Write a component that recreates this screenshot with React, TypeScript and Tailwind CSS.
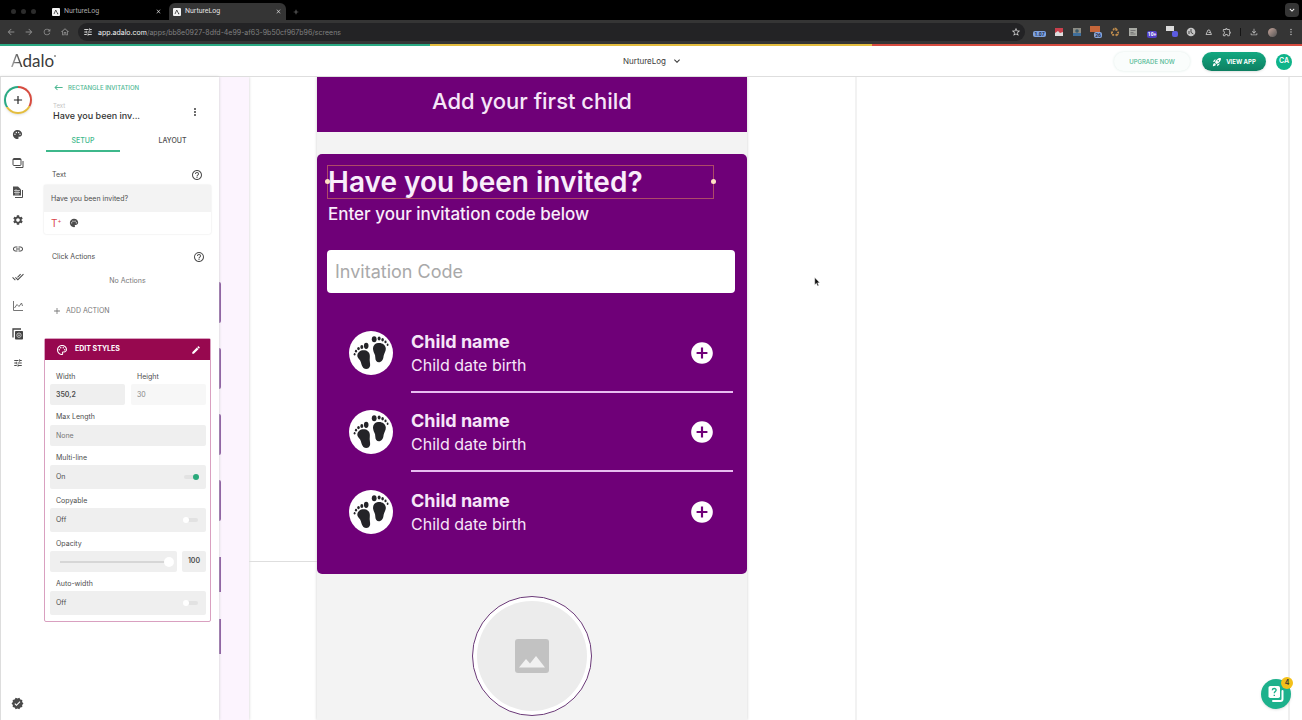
import React from "react";
import {
  MdPalette, MdSettings, MdLink, MdDoneAll, MdHelpOutline, MdEdit, MdTune, MdMoreVert,
  MdRocketLaunch, MdOutlinePalette, MdAdd, MdArrowBack, MdArrowForward, MdRefresh, MdOutlineHome,
  MdStarBorder, MdOutlineFileDownload, MdOutlineExtension, MdKeyboardArrowDown, MdClose, MdVerified,
  MdKeyboardBackspace, MdRecycling, MdAddCircle,
} from "react-icons/md";

const uiFont = "font-['Inter','Liberation_Sans',sans-serif]";
const chromeFont = "font-['Roboto','Liberation_Sans',sans-serif]";

function Favicon() {
  return (
    <svg viewBox="0 0 16 16" className="size-2 shrink-0" aria-hidden="true">
      <rect width="16" height="16" rx="2" fill="#f2f2f2" />
      <path d="M4 12 7.5 4l4 8" stroke="#333" strokeWidth="1.6" fill="none" />
      <circle cx="11.5" cy="11.5" r="1.2" fill="#333" />
    </svg>
  );
}

function BrowserTab({ active = false }: { active?: boolean }) {
  return (
    <div
      className={
        active
          ? "flex h-full w-[117px] items-center gap-1 rounded-t-md bg-[#353535] pr-1 pl-1 text-[#e4e4e4]"
          : "flex h-full w-[117px] items-center gap-1 pr-[7px] text-[#a8a8a8]"
      }
    >
      <Favicon />
      <span className="flex-1 text-[7px] leading-none">NurtureLog</span>
      <button aria-label="Close tab" className="text-[#d0d0d0]">
        <MdClose className="size-[7px]" />
      </button>
    </div>
  );
}

function Extensions() {
  return (
    <div className="flex items-center gap-2 text-[#b5b5b5]">
      <span className="flex h-2.5 w-[13px] items-end justify-center text-[5px] font-bold">
        <span className="rounded-xs bg-[#7fa3e0] px-px leading-[6px] text-[#1d2b4a]">1.07</span>
      </span>
      <svg viewBox="0 0 10 10" className="size-2.5" aria-hidden="true">
        <path d="M1 1h8v5H1z" fill="#c9404c" />
        <path d="M1 9V6l3-2 2 2 3-1v4z" fill="#ddd" />
      </svg>
      <svg viewBox="0 0 10 10" className="size-2.5" aria-hidden="true">
        <rect x="1" y="1" width="8" height="5" fill="#8d8d85" />
        <rect x="1" y="6" width="8" height="3" fill="#3f6f9c" />
        <circle cx="5" cy="4" r="1.8" fill="#3b5a6b" />
      </svg>
      <span className="flex h-3 w-3 flex-col">
        <span className="h-1.5 w-2.5 bg-[#c5663a]" />
        <span className="self-end rounded-xs bg-[#8aa6d8] px-px text-[5px] font-bold leading-[6px] text-[#1d2b4a]">26</span>
      </span>
      <MdRecycling className="size-2.5 text-[#c08d4d]" />
      <svg viewBox="0 0 10 10" className="size-2.5" aria-hidden="true">
        <rect x="1" y="1" width="8" height="8" fill="#a8aaa4" />
        <path d="M2.5 3.5h5M2.5 5.5h3M2.5 7h5" stroke="#777" />
      </svg>
      <span className="flex h-3 w-3 items-end justify-center">
        <span className="rounded-xs bg-[#5140c8] px-px text-[5px] font-bold leading-[7px] text-white">10+</span>
      </span>
      <span className="flex h-3 w-3 flex-col">
        <span className="h-[5px] w-2 bg-[#dcdcdc]" />
        <span className="size-1.5 self-end rounded-xs bg-[#5b5be0]" />
      </span>
      <svg viewBox="0 0 10 10" className="size-2.5" aria-hidden="true">
        <circle cx="5" cy="5" r="4.3" fill="#c4c4c4" />
        <path d="M5 2v3.4l2.4 1.6M3 4v3" stroke="#444" fill="none" />
      </svg>
      <svg viewBox="0 0 10 10" className="size-2.5" aria-hidden="true">
        <path d="M4 3h1.500l2 4.500H2zM4.500 5.500H7" stroke="#b5b5b5" fill="none" />
      </svg>
      <MdOutlineExtension className="size-2.5" />
    </div>
  );
}

function Browser() {
  return (
    <div className={chromeFont}>
      <div className="flex h-5 items-stretch bg-black pt-[3px]">
        <div className="flex w-[52px] items-center gap-[5px] pl-[11px]">
          <span className="size-[5px] rounded-full bg-[#2c2c2c]" />
          <span className="size-[5px] rounded-full bg-[#2c2c2c]" />
          <span className="size-[5px] rounded-full bg-[#2c2c2c]" />
        </div>
        <BrowserTab />
        <BrowserTab active />
        <button aria-label="New tab" className="ml-[6px] text-[#8a8a8a]">
          <MdAdd className="size-2" />
        </button>
        <button aria-label="Search tabs" className="mr-[3px] ml-auto flex h-3.5 w-3.5 items-center justify-center rounded bg-[#353535] text-white">
          <MdKeyboardArrowDown className="size-2.5" />
        </button>
      </div>
      <div className="flex h-6 items-center bg-[#353535] pr-[6px] pl-[6px] text-[#8c8c8c]">
        <div className="flex items-center gap-2">
          <button aria-label="Back"><MdArrowBack className="size-2.5" /></button>
          <button aria-label="Forward"><MdArrowForward className="size-2.5" /></button>
          <button aria-label="Reload"><MdRefresh className="size-2.5" /></button>
          <button aria-label="Home"><MdOutlineHome className="size-2.5" /></button>
        </div>
        <div className="ml-2 flex h-[18px] flex-1 items-center rounded-full bg-[#232325] pr-1 pl-[5px]">
          <MdTune className="size-2.5 text-[#d2d2d2]" />
          <span className={`ml-[5px] flex-1 text-[7px] leading-none text-[#808080] ${uiFont}`}>
            <span className="text-[#f1f1f1]">app.adalo.com</span>/apps/bb8e0927-8dfd-4e99-af63-9b50cf967b96/screens
          </span>
          <MdStarBorder className="size-2.5 text-[#d8d8d8]" />
        </div>
        <div className="ml-2"><Extensions /></div>
        <span className="mr-2 ml-2 h-2 w-px bg-[#151515]" />
        <div className="flex items-center gap-[9px] text-[#b5b5b5]">
          <MdOutlineFileDownload className="size-2.5" />
          <span className="size-[9px] rounded-full bg-linear-to-br from-[#c7a59b] to-[#555]" />
          <MdMoreVert className="size-2.5" />
        </div>
      </div>
      <div className="grid h-0.5 grid-cols-[33fr_34fr_33fr]">
        <span className="bg-[#2aa983]" />
        <span className="bg-[#e3bd3f]" />
        <span className="bg-[#d64b3f]" />
      </div>
    </div>
  );
}

function Header() {
  return (
    <header className="grid h-[31px] shrink-0 grid-cols-3 items-center border-b border-[#dedede] bg-white pr-2.5 pl-[11px]">
      <div className="flex items-start font-['Lato','Liberation_Sans',sans-serif] text-[17px] leading-5 text-[#3c3c3c]">
        <span className="bg-linear-to-r from-[#aaa] to-[#333] bg-clip-text text-transparent">A</span>
        <span>dalo</span>
        <span className="mt-1 size-0.5 rounded-full bg-[#888]" />
      </div>
      <button className="flex items-center gap-[5px] justify-self-center pl-[3px] text-[8px] text-[#3a3a3a]">
        NurtureLog <MdKeyboardArrowDown className="size-3" />
      </button>
      <div className="flex items-center justify-end gap-2.5 pt-px">
        <button className="mr-0.5 h-[19px] w-[76px] rounded-full bg-[#fafdfc] text-[6px] font-medium text-[#4fb893] shadow-[0_0_3px_#dcebe6]">
          UPGRADE NOW
        </button>
        <button className="flex h-[19px] w-16 items-center justify-center gap-1 rounded-full bg-linear-to-b from-[#13a981] to-[#0d7f61] text-[6px] font-bold text-white shadow-sm">
          <MdRocketLaunch className="size-2.5" /> VIEW APP
        </button>
        <button className="flex size-4 items-center justify-center rounded-full bg-[#0fb489] text-[7px] font-semibold text-white">CA</button>
      </div>
    </header>
  );
}

function ScreensIcon() {
  return (
    <svg viewBox="0 0 12 12" className="size-3" fill="none" stroke="#4a4a4a" aria-hidden="true">
      <rect x="1" y="1.500" width="8" height="7" rx="1" />
      <path d="M1 2.500h8M11 4v6.500H3.500" />
    </svg>
  );
}

function DatabaseIcon() {
  return (
    <svg viewBox="0 0 12 12" className="size-3" aria-hidden="true">
      <path d="M1 .5h5l3 3v6H1z" fill="#4f4f4f" />
      <path d="M10.500 4v7.500H3" stroke="#4f4f4f" fill="none" />
      <path d="M2 4.500h6M2 6.500h6M4 3v6M6 4v5" stroke="#ddd" strokeWidth=".7" />
    </svg>
  );
}

function AnalyticsIcon() {
  return (
    <svg viewBox="0 0 12 12" className="size-3" fill="none" stroke="#666" strokeWidth=".9" aria-hidden="true">
      <path d="M1.500 1v9.500H11M2.500 8 5 4.500l2 2L9.500 3l1 3" />
    </svg>
  );
}

function VersionsIcon() {
  return (
    <svg viewBox="0 0 12 12" className="size-3" aria-hidden="true">
      <path d="M1 9.500V1h8" stroke="#444" fill="none" strokeWidth="1.300" />
      <rect x="3" y="3" width="8" height="8.500" rx=".8" fill="#444" />
      <circle cx="7" cy="7.200" r="2.200" stroke="#ddd" strokeWidth=".8" fill="none" />
      <circle cx="7" cy="7.200" r=".8" fill="#ddd" />
    </svg>
  );
}

const railItems = [
  { label: "Branding", icon: <MdPalette className="size-[11px]" /> },
  { label: "Screens", icon: <ScreensIcon /> },
  { label: "Database", icon: <DatabaseIcon /> },
  { label: "Settings", icon: <MdSettings className="size-3" /> },
  { label: "Link", icon: <MdLink className="size-3" /> },
  { label: "Publish", icon: <MdDoneAll className="size-3" /> },
  { label: "Analytics", icon: <AnalyticsIcon /> },
  { label: "Versions", icon: <VersionsIcon /> },
  { label: "Advanced", icon: <MdTune className="size-2.5" /> },
];

function Rail() {
  return (
    <nav className="flex w-9 flex-col items-center border-l border-[#ddd] pt-[9px] pr-0.5 pb-[10px] text-[#4a4a4a]">
      <button
        aria-label="Add"
        className="flex size-7 items-center justify-center rounded-full bg-[conic-gradient(#d64b3f_0_33%,#e3bd3f_33%_66%,#2aa983_66%)] shadow-sm"
      >
        <span className="flex size-6 items-center justify-center rounded-full bg-white text-[#222]">
          <MdAdd className="size-3.5" />
        </span>
      </button>
      <div className="mt-[13px] flex h-[243px] flex-col justify-between">
        {railItems.map((item) => (
          <button key={item.label} aria-label={item.label} className="flex h-[15px] w-5 items-center justify-center">
            {item.icon}
          </button>
        ))}
      </div>
      <button aria-label="Status" className="mt-auto">
        <MdVerified className="size-[13px]" />
      </button>
    </nav>
  );
}

function Toggle({ id, label, on = false }: { id: string; label: string; on?: boolean }) {
  return (
    <div>
      <label htmlFor={id} className="block px-1.5 text-[7px] leading-3">{label}</label>
      <label className="mt-px flex h-6 cursor-pointer items-center justify-between rounded-xs bg-[#efefef] pr-2 pl-1.5 text-[7px]">
        {on ? "On" : "Off"}
        <span className="relative h-1 w-3.5 rounded-full bg-[#e2e2e2]">
          <input id={id} type="checkbox" defaultChecked={on} className="peer absolute inset-0 opacity-0" />
          <span className="absolute top-[-1px] left-[-1px] size-1.5 rounded-full bg-white peer-checked:left-[9px] peer-checked:bg-[#2aa97b]" />
        </span>
      </label>
    </div>
  );
}

function StylesCard() {
  return (
    <section className="mx-2 mt-[21px] rounded-xs border border-[#d9a0c0] bg-white text-[#4d4d4d]">
      <button className="flex h-[21px] w-full items-center gap-[7px] bg-[#97084f] pr-[9px] pl-[11px] text-white">
        <MdOutlinePalette className="size-3" />
        <span className="flex-1 text-left text-[7px] font-bold">EDIT STYLES</span>
        <MdEdit className="size-2.5" />
      </button>
      <div className="flex flex-col gap-[6px] pt-[11px] pr-1 pb-1.5 pl-[5px]">
        <div className="grid grid-cols-[75px_1fr] gap-1.5">
          <div>
            <label htmlFor="width" className="block px-1.5 text-[7px] leading-3">Width</label>
            <input id="width" defaultValue="350,2" className="mt-px block h-[21px] w-full rounded-xs bg-[#efefef] px-1.5 text-[7px] font-semibold" />
          </div>
          <div>
            <label htmlFor="height" className="block px-1.5 text-[7px] leading-3">Height</label>
            <input id="height" defaultValue="30" className="mt-px block h-[21px] w-full rounded-xs bg-[#f7f7f7] px-1.5 text-[7px] text-[#888]" />
          </div>
        </div>
        <div>
          <label htmlFor="max" className="block px-1.5 text-[7px] leading-3">Max Length</label>
          <input id="max" placeholder="None" className="mt-0.5 block h-[21px] w-full rounded-xs bg-[#efefef] px-1.5 text-[7px] placeholder:text-[#777]" />
        </div>
        <Toggle id="multi" label="Multi-line" on />
        <Toggle id="copy" label="Copyable" />
        <div>
          <label htmlFor="opacity" className="block px-1.5 text-[7px] leading-3">Opacity</label>
          <div className="mt-px flex h-[21px] gap-[5px]">
            <div className="flex flex-1 items-center rounded-xs bg-[#efefef] pr-[3px] pl-2.5">
              <input
                id="opacity"
                type="range"
                defaultValue={100}
                className="h-0.5 w-full appearance-none bg-[#d6d6d6] [&::-webkit-slider-thumb]:size-2.5 [&::-webkit-slider-thumb]:appearance-none [&::-webkit-slider-thumb]:rounded-full [&::-webkit-slider-thumb]:bg-white"
              />
            </div>
            <input aria-label="Opacity value" defaultValue="100" className="w-6 rounded-xs bg-[#efefef] text-center text-[7px] font-semibold" />
          </div>
        </div>
        <Toggle id="auto" label="Auto-width" />
      </div>
    </section>
  );
}

function Inspector() {
  return (
    <div className="flex-1 text-[#4d4d4d]">
      <a href="#parent" className="mt-1 ml-[17px] flex h-3 items-center gap-1 text-[6px] font-medium text-[#4fb893]">
        <MdKeyboardBackspace className="size-[11px]" /> RECTANGLE INVITATION
      </a>
      <div className="mt-[9px] flex items-center pr-[18px] pl-[17px]">
        <div className="flex-1">
          <p className="text-[6px] leading-[8px] text-[#c4c4c4]">Text</p>
          <h2 className="text-[9px] leading-[12px] font-medium text-[#333]">Have you been inv...</h2>
        </div>
        <button aria-label="More"><MdMoreVert className="size-3" /></button>
      </div>
      <div role="tablist" className="mt-2.5 grid grid-cols-[74px_1fr] gap-3 pr-1.5 pl-2.5 text-[7px] font-medium">
        <button role="tab" aria-selected="true" className="h-5 border-b-2 border-[#3db88b] text-[#3db88b]">SETUP</button>
        <button role="tab" aria-selected="false" className="h-5 border-b-2 border-transparent">LAYOUT</button>
      </div>
      <div className="mt-[17px] flex items-center justify-between pr-4 pl-4 text-[7px]">
        <label htmlFor="text">Text</label>
        <MdHelpOutline className="size-3" />
      </div>
      <div className="mx-2 mt-1 rounded-xs shadow-[0_0_2px_#ddd]">
        <input id="text" defaultValue="Have you been invited?" className="block h-[27px] w-full bg-[#f3f3f3] px-[7px] text-[7px]" />
        <div className="flex h-[22px] items-center gap-2 px-[7px]">
          <button aria-label="Magic text" className="flex items-start text-[#d9444c]">
            <span className="text-[10px] leading-3">T</span>
            <span className="text-[6px] leading-2">+</span>
          </button>
          <button aria-label="Text color"><MdPalette className="size-2.5" /></button>
        </div>
      </div>
      <div className="mt-[17px] flex items-center justify-between pr-[14px] pl-4 text-[7px]">
        <span>Click Actions</span>
        <MdHelpOutline className="size-3" />
      </div>
      <p className="mt-[12px] text-center text-[7px] leading-3 text-[#777]">No Actions</p>
      <button className="mt-[18px] ml-4 flex h-3 items-center gap-1 text-[7px] text-[#777]">
        <MdAdd className="size-2.5" /> ADD ACTION
      </button>
      <StylesCard />
    </div>
  );
}

function Feet() {
  return (
    <svg viewBox="0 0 44 44" className="size-11 shrink-0" aria-hidden="true">
      <circle cx="22" cy="22" r="22" fill="#fff" />
      <g fill="#242428">
        <path d="M8.300 24.500c.3-3.700 3.700-5.800 7.500-5.200 4 .7 5.500 3.700 5 7.400-.5 3.300.6 5.500.3 8-.4 3-4 4.400-6.700 2.200-2.300-2.200-1.800-5-3.400-7.600-1.100-1.600-2.900-2.900-2.700-4.800z" />
        <ellipse cx="17.200" cy="14.800" rx="2.300" ry="3.100" />
        <ellipse cx="12.800" cy="15.900" rx="1.500" ry="2" />
        <ellipse cx="9.500" cy="17.600" rx="1.300" ry="1.700" />
        <ellipse cx="7" cy="20.200" rx="1.100" ry="1.400" />
        <ellipse cx="5.600" cy="23.200" rx=".9" ry="1.200" />
        <path d="M36.800 17.500c-.3-4-4-6.100-7.800-5.500-3.800.6-5.300 3.500-4.900 6.800.5 3.300 2.300 4.500 2.200 7.700-.1 3.200 1.900 5.200 4.300 4.700 3-.6 3.700-3.400 4-6.100.4-2.800 2.400-4.700 2.200-7.600z" />
        <ellipse cx="25.200" cy="8.300" rx="2.400" ry="3" />
        <ellipse cx="30.100" cy="7.600" rx="1.500" ry="2" />
        <ellipse cx="33.600" cy="8.700" rx="1.300" ry="1.700" />
        <ellipse cx="36.500" cy="10.900" rx="1.100" ry="1.400" />
        <ellipse cx="38.600" cy="13.700" rx=".9" ry="1.200" />
      </g>
    </svg>
  );
}

function ChildRow({ last = false }: { last?: boolean }) {
  return (
    <li className="flex flex-1 gap-[18px]">
      <Feet />
      <div
        className={
          last
            ? "flex h-[62px] flex-1 items-start justify-between pr-[18px]"
            : "flex h-[62px] flex-1 items-start justify-between border-b-2 border-[#e8bdf0] pr-[18px]"
        }
      >
        <div className="text-[#f6e6f8]">
          <p className="text-[18px] leading-[22px] font-bold">Child name</p>
          <p className="mt-px text-[16px] leading-[22px]">Child date birth</p>
        </div>
        <button aria-label="Add child" className="flex h-11 items-center text-white">
          <MdAddCircle className="size-[26px]" />
        </button>
      </div>
    </li>
  );
}

function PhotoPlaceholder() {
  return (
    <svg viewBox="0 0 34 34" className="size-[34px]" aria-hidden="true">
      <rect width="34" height="34" rx="3" fill="#c2c2c2" />
      <path d="M4 28.500 11 20l4 4.500 6-7.500 9 11.500z" fill="#f1f1f1" />
    </svg>
  );
}

function PhoneScreen() {
  return (
    <main className="flex w-[430px] shrink-0 flex-col bg-[#f3f3f3] shadow-[0_0_3px_#ccc]">
      <button className="flex h-[55px] shrink-0 items-center justify-center bg-[#6f0078] pb-1.5 text-[22px] font-medium text-[#f6e6f8]">
        Add your first child
      </button>
      <section className="mt-[22px] h-[420px] shrink-0 rounded-[5px] bg-[#6f0078] pt-[11px] pr-3 pl-[10px] text-[#f9edfb]">
        <div className="relative h-[34px] w-[387px] border border-[#ae4a68]">
          <h1 className="text-[28px] leading-8 font-semibold whitespace-nowrap">Have you been invited?</h1>
          <span className="absolute top-[13px] left-[-3px] size-[5px] rounded-full bg-[#ffe3c4]" />
          <span className="absolute top-[13px] right-[-3px] size-[5px] rounded-full bg-[#ffe3c4]" />
        </div>
        <p className="mt-[3px] pl-px text-[17px] leading-6 font-medium">Enter your invitation code below</p>
        <input
          aria-label="Invitation Code"
          placeholder="Invitation Code"
          className="mt-6 block h-[43px] w-full rounded bg-white px-2 text-[18px] text-[#333] placeholder:text-[#a9a9a9]"
        />
        <ul className="mt-[38px] flex h-[238px] flex-col pr-0.5 pl-[22px]">
          <ChildRow />
          <ChildRow />
          <ChildRow last />
        </ul>
      </section>
      <div className="mt-[22px] flex size-[120px] shrink-0 items-center justify-center self-center rounded-full border border-[#6b3a78] bg-white">
        <div className="flex size-[110px] items-center justify-center rounded-full bg-[#ececec]">
          <PhotoPlaceholder />
        </div>
      </div>
    </main>
  );
}

function Canvas() {
  return (
    <div className="relative flex min-w-0 flex-1 overflow-hidden bg-white">
      <div className="w-[30px] shrink-0 bg-[#fcf4fe] shadow-[0_0_3px_#ccc]">
        <div className="mt-[205px] flex flex-col gap-[25px]">
          <span className="h-[41px] w-0.5 rounded-r bg-[#85519c]" />
          <span className="h-[41px] w-0.5 rounded-r bg-[#85519c]" />
          <span className="h-[41px] w-0.5 rounded-r bg-[#85519c]" />
          <span className="h-[41px] w-0.5 rounded-r bg-[#85519c]" />
        </div>
        <div className="mt-[36px] flex flex-col gap-[27px]">
          <span className="h-[35px] w-0.5 bg-[#85519c]" />
          <span className="h-[35px] w-0.5 bg-[#85519c]" />
        </div>
      </div>
      <div className="w-[68px] shrink-0">
        <div className="h-[485px] border-b border-[#dedede]" />
      </div>
      <PhoneScreen />
      <div className="w-[110px] shrink-0 border-r-2 border-[#f2f2f2] pt-[200px] pl-[67px]">
        <svg viewBox="0 0 8 12" className="h-2.5 w-[7px]" aria-hidden="true">
          <path d="M.7.7v8.600l2-1.800 1.400 3.200 1.400-.6L4.100 7h2.600z" fill="#111" stroke="#fff" strokeWidth=".5" />
        </svg>
      </div>
      <div className="flex-1" />
      <div className="w-3.5 shrink-0 border-l-2 border-[#efefef]" />
      <button aria-label="Help" className="absolute right-[11px] bottom-[11px] flex size-[30px] items-center justify-center rounded-full bg-[#1db18c] shadow">
        <svg viewBox="0 0 18 18" className="size-[18px]" aria-hidden="true">
          <path d="M15.500 6v8a2 2 0 0 1-2 2H6" stroke="#fff" strokeWidth="2" fill="none" strokeLinecap="round" />
          <rect x="1.500" y="1" width="11.500" height="12" rx="1.800" fill="#fff" />
          <path d="M5.300 5.200c.2-2.400 4-2.200 3.800.1-.1 1.200-1.800 1.400-1.800 2.900M7.300 9.700v1.200" stroke="#1db18c" strokeWidth="1.400" fill="none" />
        </svg>
        <span className="absolute -top-0.5 -right-0.5 flex size-3 items-center justify-center rounded-full bg-[#f3c019] text-[7px] font-semibold text-[#333]">4</span>
      </button>
    </div>
  );
}

export default function App() {
  return (
    <div className={`flex h-screen flex-col overflow-hidden bg-white ${uiFont}`}>
      <Browser />
      <Header />
      <div className="flex min-h-0 flex-1">
        <aside className="z-10 flex w-[219px] shrink-0 bg-white shadow-[0_0_3px_#ccc]">
          <Rail />
          <Inspector />
        </aside>
        <Canvas />
      </div>
    </div>
  );
}
